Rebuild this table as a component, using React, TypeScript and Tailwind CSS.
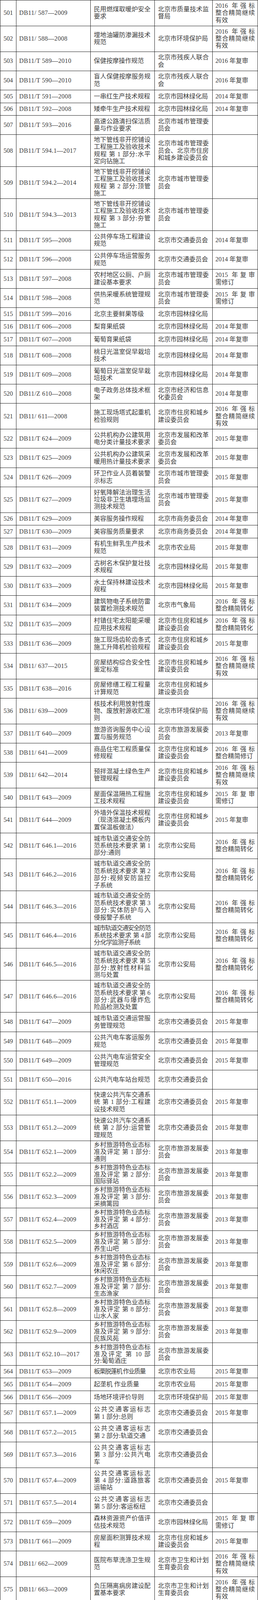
type Row = [number, string, string, string, string, number];

// remark shortcuts
const A = "2016 年强标|整合精简继续|有效";
const B = "2016 年强标|整合精简转化";
const C = "2015 年复审|需修订";
const D = "2016 年强标|整合精简修订";
const R13 = "2013 年复审";
const R14 = "2014 年复审";
const R15 = "2015 年复审";
const R16 = "2016 年复审";

const GL = "北京市园林绿化局";
const JT = "北京市交通委员会";
const CG = "北京市城市管理委|员会";
const ZF = "北京市住房和城乡|建设委员会";
const LY = "北京市旅游发展委|员会";
const GH = "北京市规划和国土|资源管理委员会";
const HB = "北京市环境保护局";
const NY = "北京市农业局";
const GA = "北京市公安局";
const XY = "乡村旅游特色业态标|准及评定 第 ";
const GT = "公共交通客运标志|第 ";
const GD = "城市轨道交通安全防|范系统技术要求 第 ";

// [no, code, name, department, remark, row height type]
// 1 = one line, 2 = two lines, 3 = three lines, 4 = four lines, 5 = tight three lines
const ROWS: Row[] = [
  [501, "DB11/ 587—2009", "民用燃煤取暖炉安全|要求", "北京市质量技术监|督局", A, 3],
  [502, "DB11/ 588—2008", "埋地油罐防渗漏技术|规范", HB, A, 3],
  [503, "DB11/T 589—2010", "保健按摩操作规范", "北京市残疾人联合|会", R16, 2],
  [504, "DB11/T 590—2010", "盲人保健按摩服务规|范", "北京市残疾人联合|会", R16, 2],
  [505, "DB11/T 591—2008", "一串红生产技术规程", GL, R14, 1],
  [506, "DB11/T 592—2008", "矮牵牛生产技术规程", GL, R14, 1],
  [507, "DB11/T 593—2016", "高速公路清扫保洁质|量与作业要求", CG, "", 2],
  [508, "DB11/T 594.1—2017", "地下管线非开挖铺设|工程施工及验收技术|规程 第 1 部分:水平|定向钻施工", "北京市城市管理委|员会、北京市住房|和城乡建设委员会", "", 4],
  [509, "DB11/T 594.2—2014", "地下管线非开挖铺设|工程施工及验收技术|规程 第 2 部分:顶管|施工", CG, "", 4],
  [510, "DB11/T 594.3—2013", "地下管线非开挖铺设|工程施工及验收技术|规程 第 3 部分:夯管|施工", CG, "", 4],
  [511, "DB11/T 595—2008", "公共停车场工程建设|规范", JT, R14, 2],
  [512, "DB11/T 596—2008", "公共停车场运营服务|规范", JT, R14, 2],
  [513, "DB11/T 597—2008", "农村地区公厕、户厕|建设基本要求", CG, C, 2],
  [514, "DB11/T 598—2008", "供热采暖系统管理规|范", CG, C, 2],
  [515, "DB11/T 599—2016", "北京主要鲜果等级", GL, "", 1],
  [516, "DB11/T 606—2008", "梨育果纸袋", GL, R14, 1],
  [517, "DB11/T 607—2008", "葡萄育果纸袋", GL, R14, 1],
  [518, "DB11/T 608—2008", "桃日光温室促早栽培|技术", GL, R14, 2],
  [519, "DB11/T 609—2008", "葡萄日光温室促早栽|培技术", GL, R14, 2],
  [520, "DB11/Z 610—2008", "电子政务总体技术框|架", "北京市经济和信息|化委员会", R14, 2],
  [521, "DB11/ 611—2008", "施工现场塔式起重机|检验规则", ZF, A, 3],
  [522, "DB11/T 624—2009", "公共机构办公建筑用|电分类计量技术要求", "北京市发展和改革|委员会", R15, 2],
  [523, "DB11/T 625—2009", "公共机构办公建筑采|暖用热计量技术要求", "北京市发展和改革|委员会", R15, 2],
  [524, "DB11/T 626—2009", "环卫作业人员着装警|示标志", CG, R15, 2],
  [525, "DB11/T 627—2009", "好氧降解法治理生活|垃圾非卫生填埋场监|测技术规范", CG, R15, 3],
  [526, "DB11/T 629—2009", "美容服务操作规程", "北京市商务委员会", R14, 1],
  [527, "DB11/T 630—2009", "美容服务质量要求", "北京市商务委员会", R14, 1],
  [528, "DB11/T 631—2009", "有机生鲜乳生产技术|规范", NY, R15, 2],
  [529, "DB11/T 632—2009", "古树名木保护复壮技|术规程", GL, R15, 2],
  [530, "DB11/T 633—2009", "水土保持林建设技术|规程", GL, R15, 2],
  [531, "DB11/T 634—2009", "建筑物电子系统防雷|装置检测技术规范", "北京市气象局", B, 2],
  [532, "DB11/T 635—2009", "村镇住宅太阳能采暖|应用技术规程", ZF, B, 2],
  [533, "DB11/T 636—2009", "施工现场齿轮齿条式|施工升降机检验规程", ZF, R15, 2],
  [534, "DB11/ 637—2015", "房屋结构综合安全性|鉴定标准", ZF, A, 3],
  [535, "DB11/T 638—2016", "房屋修缮工程工程量|计算规范", ZF, "", 2],
  [536, "DB11/ 639—2009", "核技术利用放射性废|物、废放射源收贮准|则", HB, A, 3],
  [537, "DB11/T 640—2009", "旅游咨询服务中心设|置与服务规范", LY, R13, 2],
  [538, "DB11/ 641—2009", "商品住宅工程质量保|修规程", ZF, D, 2],
  [539, "DB11/ 642—2014", "预拌混凝土绿色生产|管理规程", ZF, A, 3],
  [540, "DB11/T 643—2009", "屋面保温隔热工程施|工技术规程", ZF, C, 2],
  [541, "DB11/T 644—2009", "外墙外保温技术规程|（现浇混凝土模板内|置保温板做法）", ZF, R15, 3],
  [542, "DB11/T 646.1—2016", GD + "1|部分:通则", GA, B, 3],
  [543, "DB11/T 646.2—2016", GD + "2|部分:视频安防监控|子系统", GA, B, 4],
  [544, "DB11/T 646.3—2016", GD + "3|部分:实体防护与入|侵报警子系统", GA, B, 4],
  [545, "DB11/T 646.4—2016", "~城市轨道交通安全防范|系统技术要求 第 4 部|分:化学监测子系统", GA, B, 3],
  [546, "DB11/T 646.5—2016", GD + "5|部分:放射性材料监|测与处置", GA, B, 4],
  [547, "DB11/T 646.6—2016", GD + "6|部分:武器与爆炸危|险品检测及处置", GA, B, 4],
  [548, "DB11/T 647—2009", "城市轨道交通运营服|务管理规范", JT, R15, 2],
  [549, "DB11/T 648—2009", "公共汽电车客运服务|规范", JT, R15, 2],
  [550, "DB11/T 649—2009", "公共汽电车运营安全|管理规范", JT, R15, 2],
  [551, "DB11/T 650—2016", "公共汽电车站台规范", JT, "", 2],
  [552, "DB11/T 651.1—2009", "快速公共汽车交通系|统 第 1 部分:工程建|设技术规范", JT, R15, 3],
  [553, "DB11/T 651.2—2009", "快速公共汽车交通系|统 第 2 部分:运营管|理规范", JT, R15, 3],
  [554, "DB11/T 652.1—2009", XY + "1 部分:|通则", LY, R13, 5],
  [555, "DB11/T 652.2—2009", XY + "2 部分:|国际驿站", LY, R13, 5],
  [556, "DB11/T 652.3—2009", XY + "3 部分:|采摘篱园", LY, R13, 5],
  [557, "DB11/T 652.4—2009", XY + "4 部分:|乡村酒店", LY, R13, 5],
  [558, "DB11/T 652.5—2009", XY + "5 部分:|养生山吧", LY, R13, 5],
  [559, "DB11/T 652.6—2009", XY + "6 部分:|休闲农庄", LY, R13, 5],
  [560, "DB11/T 652.7—2009", XY + "7 部分:|生态渔家", LY, R13, 5],
  [561, "DB11/T 652.8—2009", XY + "8 部分:|山水人家", LY, R13, 5],
  [562, "DB11/T 652.9—2009", XY + "9 部分:|民族风苑", LY, R13, 5],
  [563, "DB11/T 652.10—2017", XY + "10 部|分:葡萄酒庄", LY, "", 5],
  [564, "DB11/T 653—2009", "~板栗脱蓬机 作业质量", NY, R15, 1],
  [565, "DB11/T 654—2009", "起垄机 作业质量", NY, R15, 1],
  [566, "DB11/T 656—2009", "场地环境评价导则", HB, R15, 1],
  [567, "DB11/T 657.1—2009", GT + "1 部分:总则", JT, R15, 2],
  [568, "DB11/T 657.2—2015", GT + "2 部分:轨道交通", JT, "", 2],
  [569, "DB11/T 657.3—2016", GT + "3 部分:公共汽电|车", JT, "", 3],
  [570, "DB11/T 657.4—2009", GT + "4 部分:道路旅客|运输站", JT, R15, 3],
  [571, "DB11/T 657.5—2014", GT + "5 部分:客运枢纽", JT, "", 2],
  [572, "DB11/T 659—2009", "森林资源资产价值评|估技术规范", GL, C, 2],
  [573, "DB11/T 661—2009", "房屋面积测算技术规|程", ZF, R15, 2],
  [574, "DB11/ 662—2009", "医院布草洗涤卫生规|范", "北京市卫生和计划|生育委员会", A, 3],
  [575, "DB11/ 663—2009", "负压隔离病房建设配|置基本要求", "北京市卫生和计划|生育委员会", A, 3],
  [576, "DB11/T 664—2009", "骨灰撒海服务规范", "北京市民政局", R13, 1],
  [577, "DB11/T 665—2009", "工业旅游区(点)服务|质量要求及分类", LY, R13, 2],
  [578, "DB11/T 666—2009", "游船码头安全设置规|范", JT, B, 2],
  [579, "DB11/T 667—2009", "停车诱导系统技术要|求", JT, R15, 2],
  [580, "DB11/T 668—2009", "道路货运代理及货运|辅助业经营规范", JT, R15, 2],
  [581, "DB11/T 670—2009", "精品公园评定标准", GL, R15, 1],
  [582, "DB11/T 671—2009", "~报废机井处理技术标准", "北京市水务局", R15, 1],
  [583, "DB11/T 672—2009", "再生水灌溉绿地技术|规范", GL, R15, 2],
  [584, "DB11/T 673—2009", "清洁生产标准 金属|切削加工", HB, R15, 2],
  [585, "DB11/T 674—2009", "清洁生产标准 果蔬|汁及果蔬汁饮料制造", HB, R15, 2],
  [586, "DB11/T 675—2014", "清洁生产评价指标体|系 医药制造业", "北京市经济和信息|化委员会", "", 2],
  [587, "DB11/T 676—2009", "水产养殖动物疫区划|定与处理技术规范", NY, R15, 2],
  [588, "DB11/T 677—2009", "动物防疫抽样规范", NY, R15, 1],
  [589, "DB11/T 678—2009", "畜禽养殖场鼠害控制|与效果评价", NY, R15, 2],
  [590, "DB11/T 679—2009", "森林资源损失鉴定标|准", GL, R15, 2],
  [591, "DB11/T 680—2009", "彩色马蹄莲种球繁育|技术规程", GL, R15, 2],
  [592, "DB11/T 681—2009", "切花芍药种苗贮藏技|术规程", GL, R15, 2],
  [593, "DB11/T 682—2009", "切花百合设施生产技|术规程", GL, R15, 2],
  [594, "DB11/T 683—2009", "大油芒容器育苗技术|规程", GL, R15, 2],
  [595, "DB11/T 684—2009", "有机食品 桃生产技|术规程", GL, R15, 2],
  [596, "DB11/ 685—2013", "雨水控制与利用工程|设计规范", GH, "2017 年复审", 2],
  [597, "DB11/T 686—2009", "透水砖路面施工与验|收规程", "北京市水务局", R15, 2],
  [598, "DB11/ 687—2015", "公共建筑节能设计标|准", GH, A, 3],
  [599, "DB11/T 688—2009", "城市雕塑工程建设质|量技术规范", GH, R16, 2],
  [600, "DB11/ 689—2016", "建筑抗震加固技术规|程", GH, "", 2],
];

function CellText({ text }: { text: string }) {
  if (!text) return null;
  const tight = text.startsWith("~");
  const lines = (tight ? text.slice(1) : text).split("|");
  return (
    <div className={tight ? "w-full tracking-[-1.6px]" : "w-full"}>
      {lines.map((line, i) => (
        <div
          key={i}
          className={
            i < lines.length - 1
              ? "text-justify [text-align-last:justify]"
              : "text-left"
          }
        >
          {line}
        </div>
      ))}
    </div>
  );
}

function TableRow({ row }: { row: Row }) {
  const [no, code, name, dept, remark, h] = row;
  return (
    <div
      className={`grid grid-cols-[41px_190px_164px_148px_116px] border-b border-[#1e1e1e] ${
        h === 1
          ? "h-[32.6px] leading-[18.4px]"
          : h === 2
            ? "h-[49.2px] leading-[18.4px]"
            : h === 3
              ? "h-[65.8px] leading-[18.4px]"
              : h === 4
                ? "h-[82px] leading-[18.4px]"
                : "h-[57.5px] leading-[17.8px]"
      }`}
    >
      <div className="flex items-center justify-center border-r border-[#1e1e1e]">
        {no}
      </div>
      <div className="flex items-center border-r border-[#1e1e1e] pl-[7px] whitespace-nowrap tracking-[0.4px]">
        {code}
      </div>
      <div className="flex items-center border-r border-[#1e1e1e] pl-[8px] pr-[10px]">
        <CellText text={name} />
      </div>
      <div className="flex items-center border-r border-[#1e1e1e] pl-[8px] pr-[9px]">
        <CellText text={dept} />
      </div>
      <div className="flex items-center border-r border-[#1e1e1e] pl-[7px] pr-[7px]">
        <CellText text={remark} />
      </div>
    </div>
  );
}

export default function App() {
  return (
    <div className="w-[660px] bg-white border-l border-t border-[#1e1e1e] text-[16px] text-[#3b3b3b] font-['Liberation_Serif','Noto_Sans_CJK_SC',serif]">
      {ROWS.map((row) => (
        <TableRow key={row[0]} row={row} />
      ))}
    </div>
  );
}
